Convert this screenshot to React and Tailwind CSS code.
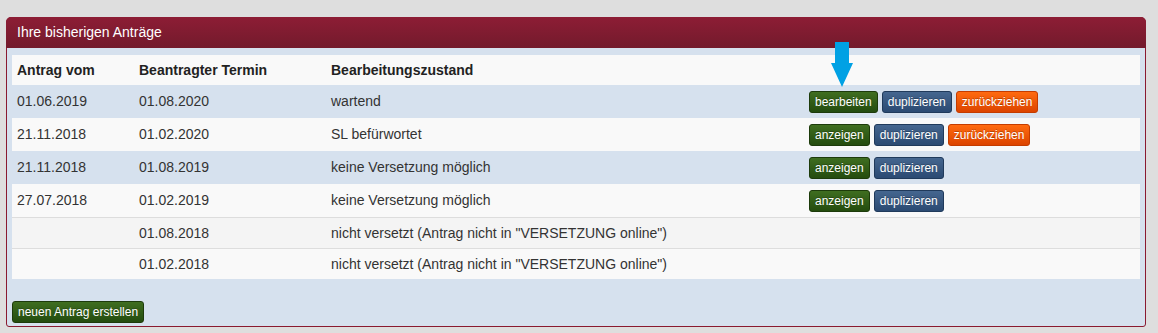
import React from "react";

const rows = [
  { vom: "01.06.2019", termin: "01.08.2020", status: "wartend", actions: ["bearbeiten", "duplizieren", "zurückziehen"], bg: "bg-[#d6e1ee]", line: "border-[#d6e1ee]" },
  { vom: "21.11.2018", termin: "01.02.2020", status: "SL befürwortet", actions: ["anzeigen", "duplizieren", "zurückziehen"], bg: "bg-[#f9f9f9]", line: "border-[#f9f9f9]" },
  { vom: "21.11.2018", termin: "01.08.2019", status: "keine Versetzung möglich", actions: ["anzeigen", "duplizieren"], bg: "bg-[#d6e1ee]", line: "border-[#d6e1ee]" },
  { vom: "27.07.2018", termin: "01.02.2019", status: "keine Versetzung möglich", actions: ["anzeigen", "duplizieren"], bg: "bg-[#f9f9f9]", line: "border-[#f9f9f9]" },
  { vom: "", termin: "01.08.2018", status: 'nicht versetzt (Antrag nicht in "VERSETZUNG online")', actions: [], bg: "bg-[#f4f4f4]", line: "border-[#dddddd]" },
  { vom: "", termin: "01.02.2018", status: 'nicht versetzt (Antrag nicht in "VERSETZUNG online")', actions: [], bg: "bg-[#f9f9f9]", line: "border-[#dddddd]" },
];

const btnStyles = {
  green: "bg-gradient-to-b from-[#3f6e20] to-[#244c0f] border-[#1d3b0b]",
  blue: "bg-gradient-to-b from-[#45668f] to-[#2b4a72] border-[#203a5b]",
  orange: "bg-gradient-to-b from-[#ff6a10] to-[#dc4400] border-[#c43c00]",
};

const kind = (label) => {
  if (label === "duplizieren") return "blue";
  if (label === "zurückziehen") return "orange";
  return "green";
};

const Btn = ({ label, color }) => (
  <button
    className={`h-[22px] px-[5px] border rounded-[3px] text-[12px] leading-[18px] text-white [text-shadow:0_-1px_0_rgba(0,0,0,0.25)] ${btnStyles[color]}`}
  >
    {label}
  </button>
);

export default function App() {
  return (
    <div
      className="relative w-[1158px] h-[333px] bg-[#dedede] pt-[17px] pl-[6px] text-[#333]"
      style={{ fontFamily: '"Liberation Sans", Arial, sans-serif' }}
    >
      {/* Panel */}
      <div className="w-[1140px] h-[310px] border border-[#8a1a30] rounded-t-[5px] rounded-b-[3px] bg-[#d6e1ee] flex flex-col">
        <div className="h-[31px] -mt-px -mx-px rounded-t-[5px] bg-gradient-to-b from-[#8d1d35] to-[#731a2c] text-white text-[14px] leading-[31px] pl-[11px]">
          Ihre bisherigen Anträge
        </div>

        <div className="pt-[7px] px-[5px]">
          <table className="w-[1128px] border-collapse text-[14px] leading-[20px] table-fixed">
            <colgroup>
              <col className="w-[122px]" />
              <col className="w-[192px]" />
              <col className="w-[478px]" />
              <col className="w-[336px]" />
            </colgroup>
            <thead>
              <tr className="bg-[#f9f9f9] text-[#222]">
                <th className="p-[5px] text-left font-bold">Antrag vom</th>
                <th className="p-[5px] text-left font-bold">Beantragter Termin</th>
                <th className="p-[5px] text-left font-bold">Bearbeitungszustand</th>
                <th className="p-[5px]"></th>
              </tr>
            </thead>
            <tbody>
              {rows.map((r, i) => (
                <tr key={i} className={r.bg}>
                  <td className={`p-[5px] align-top border-t ${r.line}`}>{r.vom}</td>
                  <td className={`p-[5px] align-top border-t ${r.line}`}>{r.termin}</td>
                  <td className={`p-[5px] align-top border-t ${r.line}`}>{r.status}</td>
                  <td className={`p-[5px] align-top border-t ${r.line}`}>
                    {r.actions.length > 0 && (
                      <div className="flex gap-[4px]">
                        {r.actions.map((a) => (
                          <Btn key={a} label={a} color={kind(a)} />
                        ))}
                      </div>
                    )}
                  </td>
                </tr>
              ))}
            </tbody>
          </table>

          <div className="mt-[20px]">
            <Btn label="neuen Antrag erstellen" color="green" />
          </div>
        </div>
      </div>

      {/* Hint arrow */}
      <svg className="absolute left-[831px] top-[42px]" width="23" height="46" viewBox="0 0 23 46">
        <polygon points="4,0 18,0 18,21 22,21 11,45 0,21 4,21" fill="#00a1e4" />
      </svg>
    </div>
  );
}
